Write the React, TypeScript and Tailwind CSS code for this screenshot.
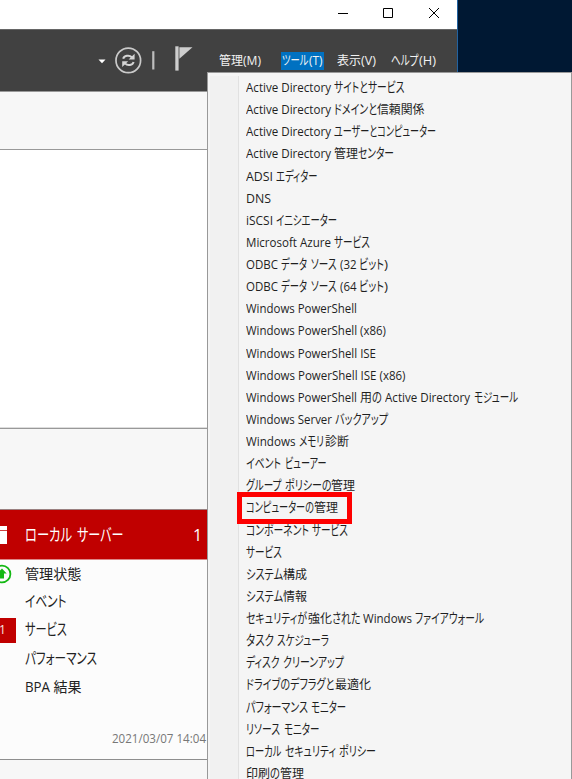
import { useLayoutEffect, useRef } from "react";

// [text, left edge, right edge] of one run, in pixels from the window's left side
type Run = [string, number, number];

const KANA = /^[\u3041-\u30ff]+$/;

function Fit({ text, width, gap }: { text: string; width: number; gap: number }) {
  const ref = useRef<HTMLSpanElement>(null);
  useLayoutEffect(() => {
    const el = ref.current;
    if (!el) return;
    el.style.transform = "none";
    const tall = KANA.test(text) ? 1.1 : 1;
    el.style.transform = `scale(${width / el.getBoundingClientRect().width}, ${tall})`;
  }, [text, width]);
  return (
    <span className="inline-block shrink-0 whitespace-pre" style={{ width, marginLeft: gap }}>
      <span ref={ref} className="inline-block origin-[0_60%] whitespace-pre">{text}</span>
    </span>
  );
}

function Line({ runs, from }: { runs: Run[]; from: number }) {
  return (
    <span className="flex items-baseline">
      {runs.map(([text, a, b], i) => (
        <Fit key={i} text={text} width={b - a} gap={a - (i === 0 ? from : runs[i - 1][2])} />
      ))}
    </span>
  );
}

const tools: Run[][] = [
  [["Active Directory", 246, 331], ["サイトとサービス", 334, 404.5]],
  [["Active Directory", 246, 331], ["ドメインと", 334, 377], ["信頼関係", 377, 424.5]],
  [["Active Directory", 246, 331], ["ユーザーとコンピューター", 334, 436]],
  [["Active Directory", 246, 331], ["管理", 334, 358], ["センター", 358, 394]],
  [["ADSI", 246, 273], ["エディター", 275.5, 317]],
  [["DNS", 246, 271]],
  [["iSCSI", 246, 273], ["イニシエーター", 276, 337]],
  [["Microsoft Azure", 246, 331], ["サービス", 334, 370]],
  [["ODBC", 246, 278], ["データ", 281, 307], ["ソース", 310.5, 336], ["(32", 339.5, 356], ["ビット", 359, 384], [")", 384, 388]],
  [["ODBC", 246, 278], ["データ", 281, 307], ["ソース", 310.5, 336], ["(64", 339.5, 356], ["ビット", 359, 384], [")", 384, 388]],
  [["Windows PowerShell", 246, 357]],
  [["Windows PowerShell (x86)", 246, 386]],
  [["Windows PowerShell ISE", 246, 376]],
  [["Windows PowerShell ISE (x86)", 246, 405.5]],
  [["Windows PowerShell", 246, 357], ["用", 360, 372], ["の", 372, 382], ["Active Directory", 385, 470], ["モジュール", 473.5, 517.5]],
  [["Windows Server", 246, 332], ["バックアップ", 335, 388]],
  [["Windows", 246, 295.5], ["メモリ", 299, 324], ["診断", 324.5, 348.5]],
  [["イベント", 246, 281], ["ビューアー", 284.5, 326]],
  [["グループ", 246, 281.5], ["ポリシーの", 284.5, 331], ["管理", 331, 355]],
  [["コンピューターの", 246, 314], ["管理", 314, 338]],
  [["コンポーネント", 246, 309], ["サービス", 312, 348]],
  [["サービス", 246, 282]],
  [["システム", 246, 283], ["構成", 283, 307]],
  [["システム", 246, 283], ["情報", 283, 307]],
  [["セキュリティが", 246, 307], ["強化", 307.5, 331.5], ["された", 331.5, 360], ["Windows", 363, 412], ["ファイアウォール", 415, 484]],
  [["タスク", 246, 274], ["スケジューラ", 277, 329]],
  [["ディスク", 246, 279.5], ["クリーンアップ", 283, 344]],
  [["ドライブのデフラグと", 246, 334.5], ["最適化", 334.5, 370.5]],
  [["パフォーマンス", 246, 308], ["モニター", 311, 346]],
  [["リソース", 246, 280], ["モニター", 283.5, 319]],
  [["ローカル", 246, 281.5], ["セキュリティ", 285, 336], ["ポリシー", 339, 376]],
  [["印刷", 246, 270], ["の", 270, 280], ["管理", 280, 304]],
];

const links: Run[][] = [
  [["管理状態", 25, 81.5]],
  [["イベント", 25, 66.5]],
  [["サービス", 25, 67]],
  [["パフォーマンス", 25, 97]],
  [["BPA", 25, 50], ["結果", 53.5, 81.5]],
];

function MenuBar() {
  return (
    <header className="flex h-[62px] border-t border-[#666] bg-[#414141] text-[12px] text-[#f2f2f2]">
      <svg width="207" height="61" viewBox="0 30 207 61" className="shrink-0">
        <path d="M98.5 59.5h7l-3.5 3.8z" fill="#fff" />
        <circle cx="128.3" cy="60.4" r="12.3" fill="none" stroke="#cacaca" strokeWidth="1.7" />
        <g fill="none" stroke="#d4d4d4" strokeWidth="2">
          <path d="M123.2 58.7c.8-3.1 6-4.2 8.6-1.4" />
          <path d="M133.6 62c-.8 3.1-6 4.2-8.6 1.4" />
        </g>
        <path d="M134.6 53.8v5.7h-6zM122.2 67v-5.7h6z" fill="#d4d4d4" />
        <path d="M152.2 51.2h2.2v18.3h-2.2z" fill="#bdbdbd" />
        <path d="M175.3 46.3h3.3v24.3h-3.3z" fill="#cecece" />
        <path d="M179.4 47.3h13.1l-13.1 11.4z" fill="#cecece" />
      </svg>
      <nav className="flex h-[61px] items-center">
        <div className="ml-[11.5px] leading-[18px]"><Line from={219} runs={[["管理", 219.5, 243.5], ["(M)", 243.5, 261.5]]} /></div>
        <div className="ml-[19.5px] h-[18px] w-[43px] bg-[#0071c1] leading-[18px]"><Line from={281} runs={[["ツール", 282.5, 309], ["(T)", 309, 322.5]]} /></div>
        <div className="ml-[13px] leading-[18px]"><Line from={337} runs={[["表示", 337, 361], ["(V)", 361.5, 376.5]]} /></div>
        <div className="ml-[15px] leading-[18px]"><Line from={391.5} runs={[["ヘルプ", 391.5, 419], ["(H)", 419.5, 436.5]]} /></div>
      </nav>
    </header>
  );
}

function ServerTile() {
  return (
    <>
      <div className="flex h-[50px] items-center border-t border-[#9a8080] bg-[#c00000] text-[16px] text-white">
        <div className="h-[18px] w-[7px] bg-white pt-[4px]"><div className="h-px bg-[#d04040]" /></div>
        <div className="ml-[18px] w-[168px]"><Line from={25} runs={[["ローカル", 25, 72], ["サーバー", 77, 123.5]]} /></div>
        <span>1</span>
      </div>
      <div className="flex h-[200px] flex-col border-t border-[#d88] bg-[#fcfcfc]">
        <div className="flex flex-col text-[14px] text-[#222]">
          {links.map((runs, i) => (
            <div key={i} className="flex h-[28.2px] items-center">
              <div className="flex w-[25px] shrink-0 items-center">
                {i === 0 && (
                  <svg width="13" height="20" viewBox="0 0 13 20">
                    <circle cx="2" cy="10" r="8.4" fill="none" stroke="#14b814" strokeWidth="1.8" />
                    <path d="M2 4.5 6.7 9.5H4v5H0V6.5z" fill="#14b814" />
                  </svg>
                )}
                {i === 2 && <div className="flex h-[25px] w-[16px] items-center bg-[#c00000] pl-px text-[12px] text-white/90"><span className="-ml-[2px]">1</span></div>}
              </div>
              <div className="-mt-px"><Line from={25} runs={runs} /></div>
            </div>
          ))}
        </div>
        <div className="mt-[29px] text-[12px] leading-[18px] text-[#777]"><Line from={0} runs={[["2021/03/07 14:04", 112, 206]]} /></div>
      </div>
    </>
  );
}

export default function App() {
  return (
    <div className="relative h-[779px] w-[572px] overflow-hidden bg-[#001833] font-['Open_Sans','Noto_Sans_CJK_JP',sans-serif] [font-feature-settings:'palt']">
      <div className="flex h-full w-[458px] flex-col border-r border-[#2262a0] bg-white">
        <div className="h-[29px] bg-white">
          <svg width="457" height="29" viewBox="0 0 457 29" fill="none" stroke="#000" strokeWidth="1">
            <path d="M338 13.5h10M383.5 8.5h9v9h-9z" />
            <path d="m429 8 10 10m0-10-10 10" />
          </svg>
        </div>
        <MenuBar />
        <main className="flex w-[207px] grow flex-col">
          <div className="h-[59px] border-y border-[#999] bg-[#f7f7f7]" />
          <div className="h-[278px] border-b border-[#ddd]" />
          <div className="h-[81px] border-t border-[#999] bg-[#f7f7f7]" />
          <ServerTile />
          <div className="grow border-t border-[#8e8e8e] bg-[#f7f7f7]" />
        </main>
      </div>

      <div className="absolute top-[72px] left-[207px] flex h-[707px] w-[365px] overflow-hidden border-t border-r border-l border-[#999] bg-[#f5f5f5] text-[12px] text-[#1f1f1f]">
        <div className="mt-[3px] ml-[2px] w-[29px] shrink-0 border-r border-[#e1e1e1] bg-[#f1f1f1]" />
        <ul className="pt-[4px] pl-[7px]">
          {tools.map((runs, i) => (
            <li key={i} className="flex h-[22.13px] items-center leading-[22px]">
              <Line from={246} runs={runs} />
            </li>
          ))}
        </ul>
      </div>
      <div className="absolute top-[492px] left-[237px] h-[32px] w-[115px] border-[5px] border-[#fe0000]" />
    </div>
  );
}
